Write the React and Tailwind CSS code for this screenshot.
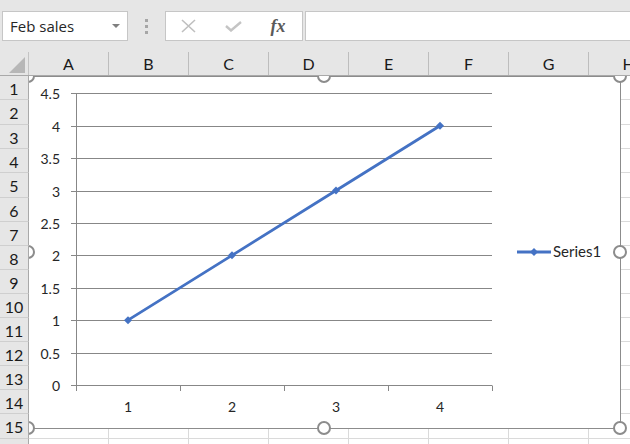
import React from "react";

const cols = ["A", "B", "C", "D", "E", "F", "G", "H"];
const rowH = [
  "h-[24px]", "h-[25px]", "h-[24px]", "h-[24px]", "h-[25px]", "h-[24px]", "h-[24px]", "h-[24px]",
  "h-[24px]", "h-[24px]", "h-[24px]", "h-[24px]", "h-[24px]", "h-[24px]", "h-[25px]", "h-[24px]",
];

const Y0 = 308;
const S = 64.82;
const yv = (v) => Y0 - v * S;
const gy = (v) => Math.round(yv(v)) + 0.5;
const ticks = [0, 0.5, 1, 1.5, 2, 2.5, 3, 3.5, 4, 4.5];
const xs = [99, 203, 307, 411];
const vals = [1, 2, 3, 4];
const font = { fontFamily: "Lato, 'Liberation Sans', sans-serif" };

function Diamond({ x, y, r = 4 }) {
  return (
    <polygon
      points={`${x},${y - r} ${x + r},${y} ${x},${y + r} ${x - r},${y}`}
      fill="#4472c4"
    />
  );
}

function ChartSvg() {
  return (
    <svg width="591" height="351" className="absolute left-0 top-0 overflow-visible" style={font}>
      {ticks.map((v) => (
        <line key={v} x1="42" x2="463" y1={gy(v)} y2={gy(v)} stroke="#878787" strokeWidth="1" />
      ))}
      <line x1="47.5" x2="47.5" y1={gy(4.5)} y2="314" stroke="#878787" strokeWidth="1" />
      {[47.5, 151.5, 255.5, 359.5, 463.5].map((x) => (
        <line key={x} x1={x} x2={x} y1={gy(0)} y2="314" stroke="#878787" strokeWidth="1" />
      ))}
      {ticks.map((v) => (
        <text key={v} x="31" y={gy(v) + 5} textAnchor="end" fontSize="14" fill="#262626">
          {String(v)}
        </text>
      ))}
      {xs.map((x, i) => (
        <text key={x} x={x} y="335" textAnchor="middle" fontSize="14" fill="#262626">
          {i + 1}
        </text>
      ))}
      <polyline
        points={xs.map((x, i) => `${x},${yv(vals[i])}`).join(" ")}
        fill="none"
        stroke="#4472c4"
        strokeWidth="2.8"
        strokeLinecap="round"
        strokeLinejoin="round"
      />
      {xs.map((x, i) => (
        <Diamond key={x} x={x} y={yv(vals[i])} />
      ))}
      <line x1="488" x2="522" y1="175" y2="175" stroke="#4472c4" strokeWidth="2.8" />
      <Diamond x={505} y={175} />
      <text x="524" y="180" fontSize="15" fill="#262626">
        Series1
      </text>
    </svg>
  );
}

function Handle({ pos }) {
  return (
    <div
      className={`absolute w-[14px] h-[14px] rounded-full border-[2.5px] border-[#8c8c8c] bg-white ${pos}`}
    />
  );
}

function Chart() {
  return (
    <div className="absolute z-10 left-[28px] top-0 w-[593px] h-[353px] border border-[#8c8c8c] bg-white">
      <ChartSvg />
      <Handle pos="left-[-8px] top-[-8px]" />
      <Handle pos="left-[288px] top-[-8px]" />
      <Handle pos="left-[584px] top-[-8px]" />
      <Handle pos="left-[-8px] top-[168px]" />
      <Handle pos="left-[584px] top-[168px]" />
      <Handle pos="left-[-8px] top-[344px]" />
      <Handle pos="left-[288px] top-[344px]" />
      <Handle pos="left-[584px] top-[344px]" />
    </div>
  );
}

export default function App() {
  return (
    <div className="w-[630px] h-[444px] overflow-hidden bg-[#e6e6e6] relative select-none">
      {/* Formula bar */}
      <div className="h-[52px] flex items-start pt-[11px] pl-[2px]">
        <div className="w-[126px] h-[30px] shrink-0 border border-[#c6c6c6] bg-white flex items-center justify-between pl-[7px] pr-[7px]">
          <span className="text-[15px] text-[#262626] leading-none" style={{ fontFamily: "'Open Sans', 'Noto Sans', sans-serif" }}>
            Feb sales
          </span>
          <svg width="8" height="5" className="mt-[1px]">
            <polygon points="0,0 8,0 4,4" fill="#7f7f7f" />
          </svg>
        </div>
        <div className="w-[37px] h-[30px] shrink-0 flex flex-col items-center justify-center gap-[3px]">
          <div className="w-[3px] h-[3px] bg-[#a6a6a6]" />
          <div className="w-[3px] h-[3px] bg-[#a6a6a6]" />
          <div className="w-[3px] h-[3px] bg-[#a6a6a6]" />
        </div>
        <div className="w-[138px] h-[30px] shrink-0 border border-[#c6c6c6] bg-white flex items-center">
          <div className="w-[44px] flex justify-center">
            <svg width="15" height="14">
              <path d="M1 1 L14 13 M14 1 L1 13" stroke="#bfbfbf" strokeWidth="1.6" />
            </svg>
          </div>
          <div className="w-[46px] flex justify-center">
            <svg width="17" height="11">
              <polyline points="1,5 6,9.5 16,1" fill="none" stroke="#c4c4c4" strokeWidth="2.4" />
            </svg>
          </div>
          <div className="w-[44px] flex justify-center">
            <span
              className="italic text-[18px] leading-none text-[#5a5a5a] font-semibold"
              style={{ fontFamily: "'Liberation Serif', 'DejaVu Serif', serif" }}
            >
              fx
            </span>
          </div>
        </div>
        <div className="ml-[2px] flex-1 h-[30px] border border-r-0 border-[#c6c6c6] bg-white" />
      </div>

      {/* Column headers */}
      <div className="relative z-20 flex h-[24px] bg-[#e6e6e6] border-b border-[#a9a9a9]" style={font}>
        <div className="w-[29px] shrink-0 border-r border-[#c4c4c4] relative">
          <svg width="17" height="16" className="absolute left-[9px] top-[5px]">
            <polygon points="16,0 16,16 0,16" fill="#b7b7b7" />
          </svg>
        </div>
        {cols.map((c) => (
          <div
            key={c}
            className="w-[80px] shrink-0 border-r border-[#bdbdbd] flex items-center justify-center text-[16px] text-[#1a1a1a]"
          >
            {c}
          </div>
        ))}
      </div>

      {/* Body */}
      <div className="relative flex flex-col" style={font}>
        {rowH.map((h, i) => (
          <div key={i} className={`flex shrink-0 ${h}`}>
            <div className="relative z-20 w-[29px] shrink-0 border-r border-b border-r-[#a9a9a9] border-b-[#cfcfcf] bg-[#e6e6e6] flex items-center justify-center text-[16px] text-[#1a1a1a] pt-[2px]">
              {i + 1}
            </div>
            {cols.map((c) => (
              <div key={c} className="w-[80px] shrink-0 border-r border-b border-[#dadada] bg-white" />
            ))}
          </div>
        ))}
        <Chart />
      </div>
    </div>
  );
}
